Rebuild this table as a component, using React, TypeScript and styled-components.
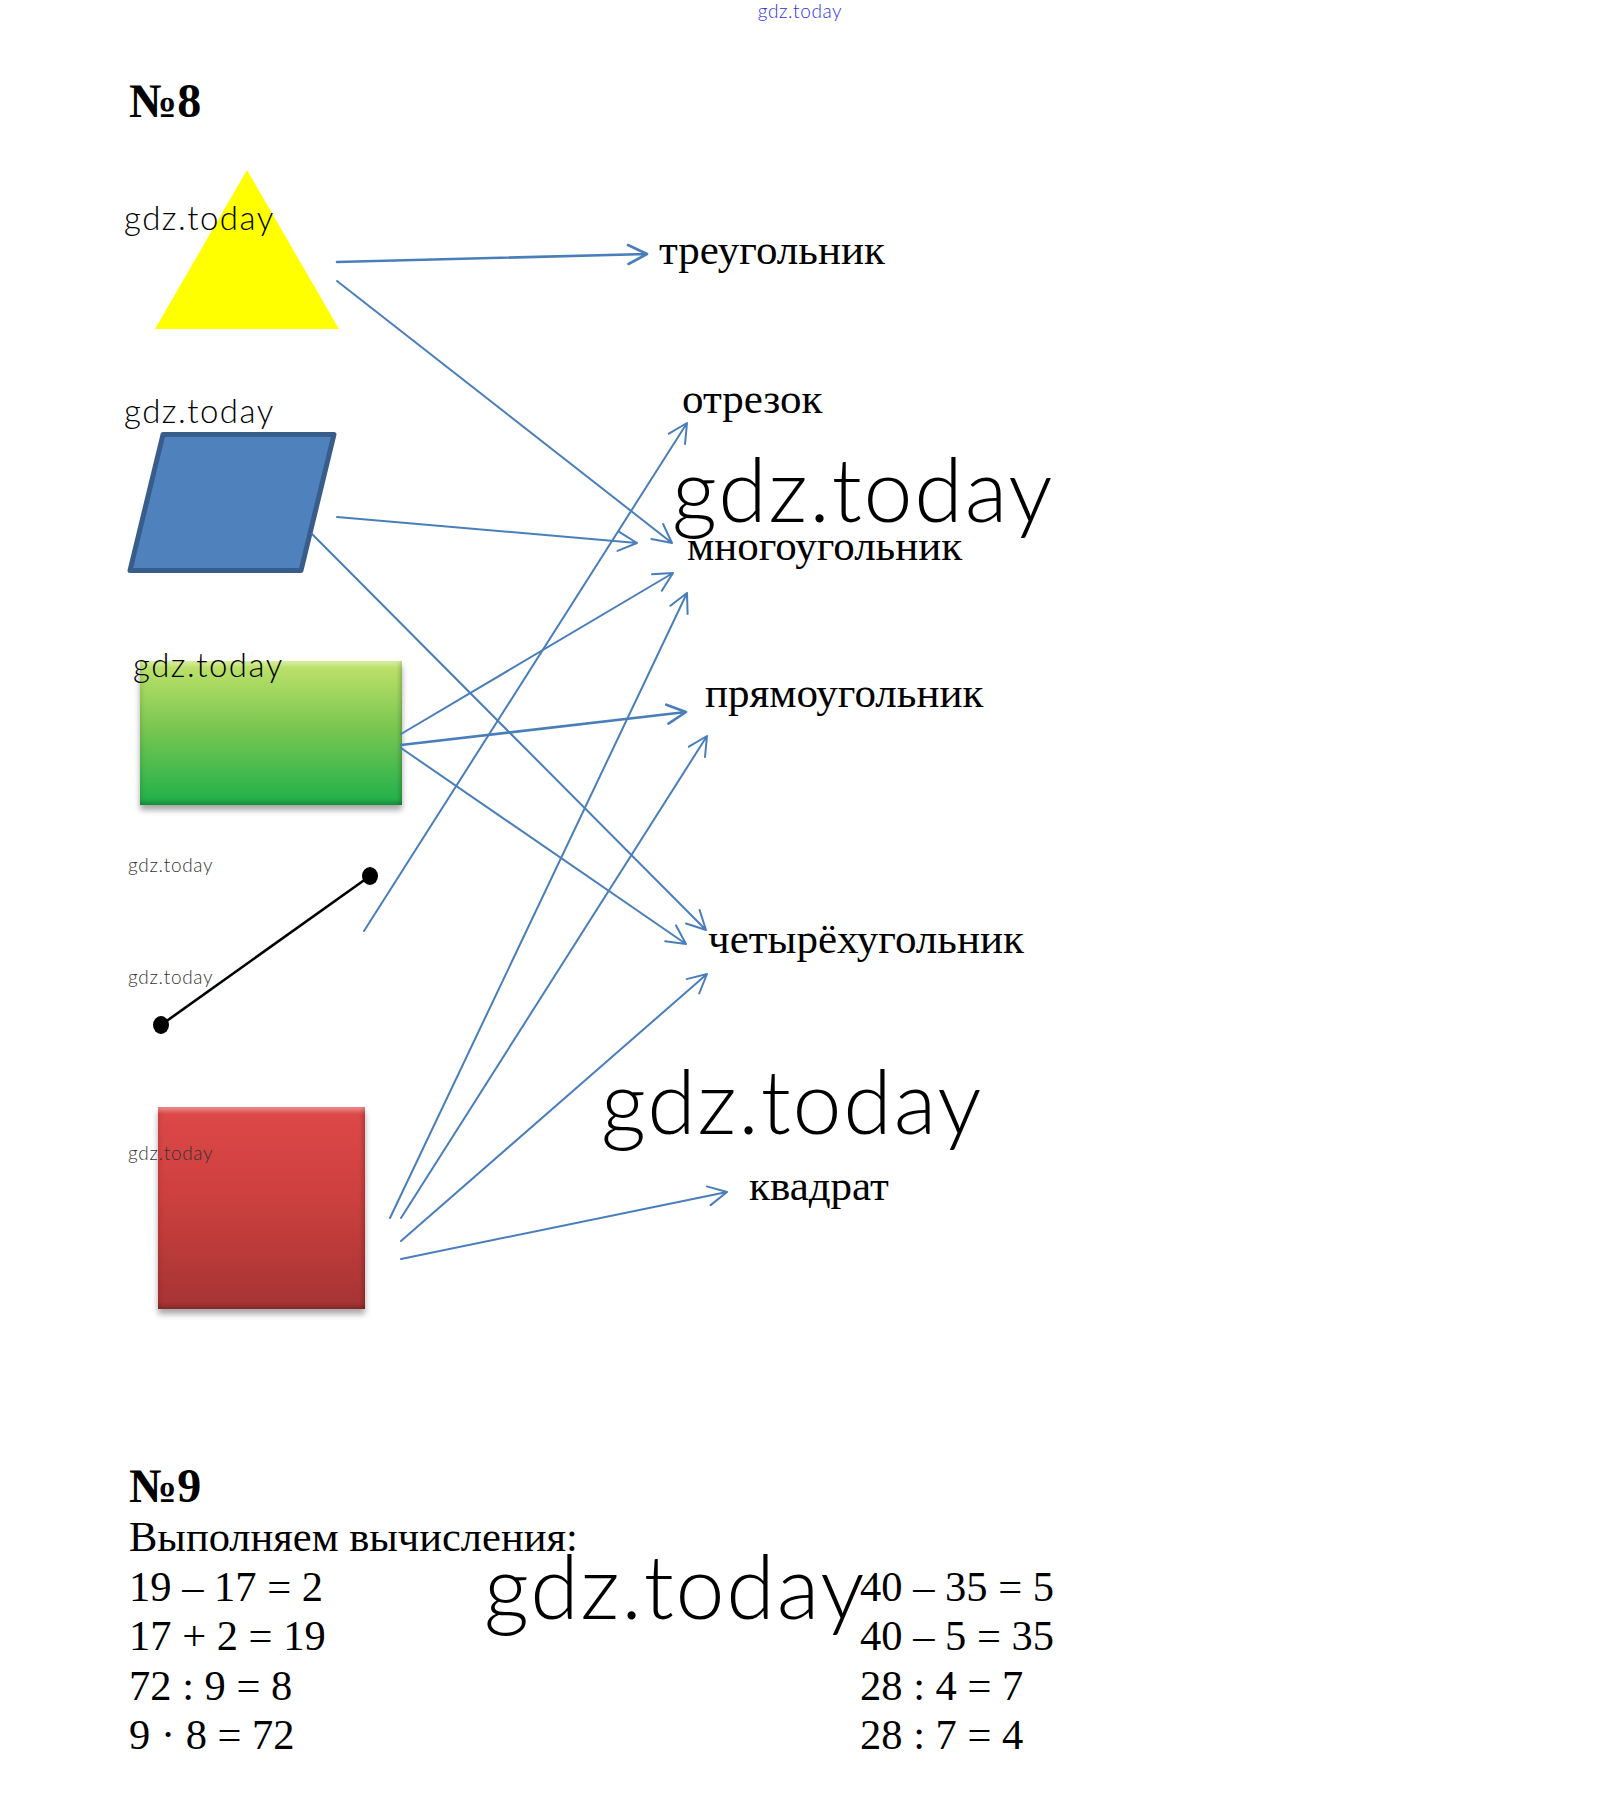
import React from "react";
import styled, { createGlobalStyle } from "styled-components";

const DY = 129; // page y where the diagram canvas starts
const DIAGRAM_H = 1331;

const Global = createGlobalStyle`
  html, body { margin: 0; padding: 0; background: #fff; }
  body { font-family: "Liberation Serif", "Times New Roman", serif; color: #000; }
`;

const Page = styled.div`
  position: relative;
  width: 1600px;
  height: 1797px;
  background: #fff;
  overflow: hidden;
`;

const Heading = styled.h2<{ $lh: number; $pt: number; $pl: number }>`
  margin: 0;
  padding: ${(p) => p.$pt}px 0 0 ${(p) => p.$pl}px;
  font-family: "Liberation Serif", "Times New Roman", serif;
  font-weight: 700;
  font-size: 48px;
  line-height: ${(p) => p.$lh}px;
`;

const Diagram = styled.div`
  position: relative;
  width: 1600px;
  height: ${DIAGRAM_H}px;
`;

const ShapeLayer = styled.svg`
  position: absolute;
  left: 0;
  top: 0;
  width: 1600px;
  height: ${DIAGRAM_H}px;
`;

const ArrowLayer = styled(ShapeLayer)`
  z-index: 2;
`;

const Block = styled.div<{
  $x: number;
  $y: number;
  $w: number;
  $h: number;
  $top: string;
  $mid: string;
  $bottom: string;
}>`
  position: absolute;
  left: ${(p) => p.$x}px;
  top: ${(p) => p.$y - DY}px;
  width: ${(p) => p.$w}px;
  height: ${(p) => p.$h}px;
  background: linear-gradient(
    to bottom,
    ${(p) => p.$top} 0%,
    ${(p) => p.$mid} 45%,
    ${(p) => p.$bottom} 100%
  );
  box-shadow: 0 5px 6px rgba(0, 0, 0, 0.35),
    inset 0 9px 4px -5px rgba(255, 255, 255, 0.35),
    inset 0 -7px 4px -4px rgba(0, 0, 0, 0.22),
    inset 7px 0 4px -5px rgba(0, 0, 0, 0.1),
    inset -7px 0 4px -5px rgba(0, 0, 0, 0.22);
  z-index: 1;
`;

const Label = styled.span<{ $x: number; $base: number }>`
  position: absolute;
  left: ${(p) => p.$x}px;
  top: ${(p) => p.$base - DY - 36}px;
  font-family: "Liberation Serif", "Times New Roman", serif;
  font-size: 43px;
  line-height: 43px;
  white-space: nowrap;
  z-index: 3;
`;

const Mark = styled.span<{
  $x: number;
  $base: number;
  $size: number;
  $ls: number;
  $color?: string;
}>`
  position: absolute;
  left: ${(p) => p.$x}px;
  top: ${(p) => p.$base - p.$size * 0.887}px;
  font-family: "Lato Light", "Lato", "Open Sans", sans-serif;
  font-weight: 300;
  font-size: ${(p) => p.$size}px;
  line-height: ${(p) => p.$size}px;
  letter-spacing: ${(p) => p.$ls}px;
  color: ${(p) => p.$color || "#000"};
  white-space: nowrap;
  z-index: 5;
`;

const TopMark = styled.div`
  position: absolute;
  top: 1px;
  left: 0;
  right: 0;
  text-align: center;
  font-family: "Lato Light", "Lato", "Open Sans", sans-serif;
  font-weight: 300;
  font-size: 19px;
  line-height: 19px;
  letter-spacing: 0.6px;
  color: #3030e0;
  z-index: 5;
`;

const Section9 = styled.section`
  padding-left: 129px;
`;

const Line = styled.div`
  font-size: 42.5px;
  line-height: 49.5px;
  white-space: pre;
`;

const Columns = styled.div`
  display: grid;
  grid-template-columns: 731px auto;
`;

const Column = styled.div`
  display: flex;
  flex-direction: column;
`;

type Pt = [number, number];
const ARROWS: { from: Pt; to: Pt; w?: number }[] = [
  { from: [337, 262], to: [647, 254], w: 2.6 },
  { from: [337, 281], to: [672, 543] },
  { from: [337, 517], to: [637, 543] },
  { from: [312, 534], to: [706, 930] },
  { from: [401, 734], to: [673, 573] },
  { from: [401, 745], to: [686, 712], w: 2.6 },
  { from: [401, 748], to: [686, 944] },
  { from: [364, 931], to: [687, 423] },
  { from: [390, 1218], to: [687, 593] },
  { from: [401, 1218], to: [707, 736] },
  { from: [401, 1241], to: [707, 974] },
  { from: [401, 1259], to: [727, 1192] },
];

function arrowPath(from: Pt, to: Pt) {
  const dx = to[0] - from[0];
  const dy = to[1] - from[1];
  const len = Math.hypot(dx, dy);
  const ux = dx / len;
  const uy = dy / len;
  const a = (27 * Math.PI) / 180;
  const L = 21;
  const rot = (s: number) => {
    const c = Math.cos(s * a);
    const sn = Math.sin(s * a);
    return [ux * c - uy * sn, ux * sn + uy * c];
  };
  const [r1x, r1y] = rot(1);
  const [r2x, r2y] = rot(-1);
  const p1 = [to[0] - L * r1x, to[1] - L * r1y];
  const p2 = [to[0] - L * r2x, to[1] - L * r2y];
  return `M${from[0]} ${from[1]} L${to[0]} ${to[1]} M${p1[0].toFixed(1)} ${p1[1].toFixed(
    1
  )} L${to[0]} ${to[1]} L${p2[0].toFixed(1)} ${p2[1].toFixed(1)}`;
}

const LEFT = ["19 – 17 = 2", "17 + 2 = 19", "72 : 9 = 8", "9 · 8 = 72"];
const RIGHT = ["40 – 35 = 5", "40 – 5 = 35", "28 : 4 = 7", "28 : 7 = 4"];

export default function App() {
  return (
    <>
      <Global />
      <Page>
        <TopMark>gdz.today</TopMark>

        <Heading $pt={73} $pl={129} $lh={56}>
          №8
        </Heading>

        <Diagram>
          <ShapeLayer viewBox={`0 ${DY} 1600 ${DIAGRAM_H}`}>
            <polygon points="247,170 155,329 339,329" fill="#ffff00" />
            <polygon
              points="163,434.5 334,434.5 301,570.5 130,570.5"
              fill="#4f81bd"
              stroke="#385d8a"
              strokeWidth="5"
              strokeLinejoin="round"
            />
            <line x1="370" y1="876" x2="161" y2="1025" stroke="#000" strokeWidth="2.6" />
            <ellipse cx="370" cy="876" rx="8" ry="9" fill="#000" />
            <ellipse cx="161" cy="1025" rx="8" ry="9" fill="#000" />
          </ShapeLayer>

          <Block
            $x={140}
            $y={661}
            $w={262}
            $h={144}
            $top="#c2e36c"
            $mid="#7cc751"
            $bottom="#1eb04b"
          />
          <Block
            $x={158}
            $y={1107}
            $w={207}
            $h={202}
            $top="#de4848"
            $mid="#cc403f"
            $bottom="#a53433"
          />

          <ArrowLayer viewBox={`0 ${DY} 1600 ${DIAGRAM_H}`}>
            {ARROWS.map((a, i) => (
              <path
                key={i}
                d={arrowPath(a.from, a.to)}
                fill="none"
                stroke="#4a7ebb"
                strokeWidth={a.w || 2}
                strokeLinecap="round"
                strokeLinejoin="round"
              />
            ))}
          </ArrowLayer>

          <Label $x={659} $base={264}>треугольник</Label>
          <Label $x={682} $base={413}>отрезок</Label>
          <Label $x={687} $base={560}>многоугольник</Label>
          <Label $x={705} $base={707}>прямоугольник</Label>
          <Label $x={708} $base={953}>четырёхугольник</Label>
          <Label $x={749} $base={1200}>квадрат</Label>
        </Diagram>

        <Section9>
          <Heading $pt={0} $pl={0} $lh={52}>
            №9
          </Heading>
          <Line>Выполняем вычисления:</Line>
          <Columns>
            <Column>
              {LEFT.map((t) => (
                <Line key={t}>{t}</Line>
              ))}
            </Column>
            <Column>
              {RIGHT.map((t) => (
                <Line key={t}>{t}</Line>
              ))}
            </Column>
          </Columns>
        </Section9>

        <Mark $x={124} $base={230} $size={33} $ls={1.5}>gdz.today</Mark>
        <Mark $x={124} $base={423} $size={33} $ls={1.5}>gdz.today</Mark>
        <Mark $x={133} $base={677} $size={33} $ls={1.5}>gdz.today</Mark>
        <Mark $x={128} $base={872} $size={19} $ls={0.7} $color="#333">gdz.today</Mark>
        <Mark $x={128} $base={984} $size={19} $ls={0.7} $color="#333">gdz.today</Mark>
        <Mark $x={128} $base={1160} $size={19} $ls={0.7} $color="#333">gdz.today</Mark>
        <Mark $x={672} $base={522} $size={88} $ls={1.8}>gdz.today</Mark>
        <Mark $x={601} $base={1134} $size={88} $ls={1.8}>gdz.today</Mark>
        <Mark $x={484} $base={1619} $size={88} $ls={1.8}>gdz.today</Mark>
      </Page>
    </>
  );
}
